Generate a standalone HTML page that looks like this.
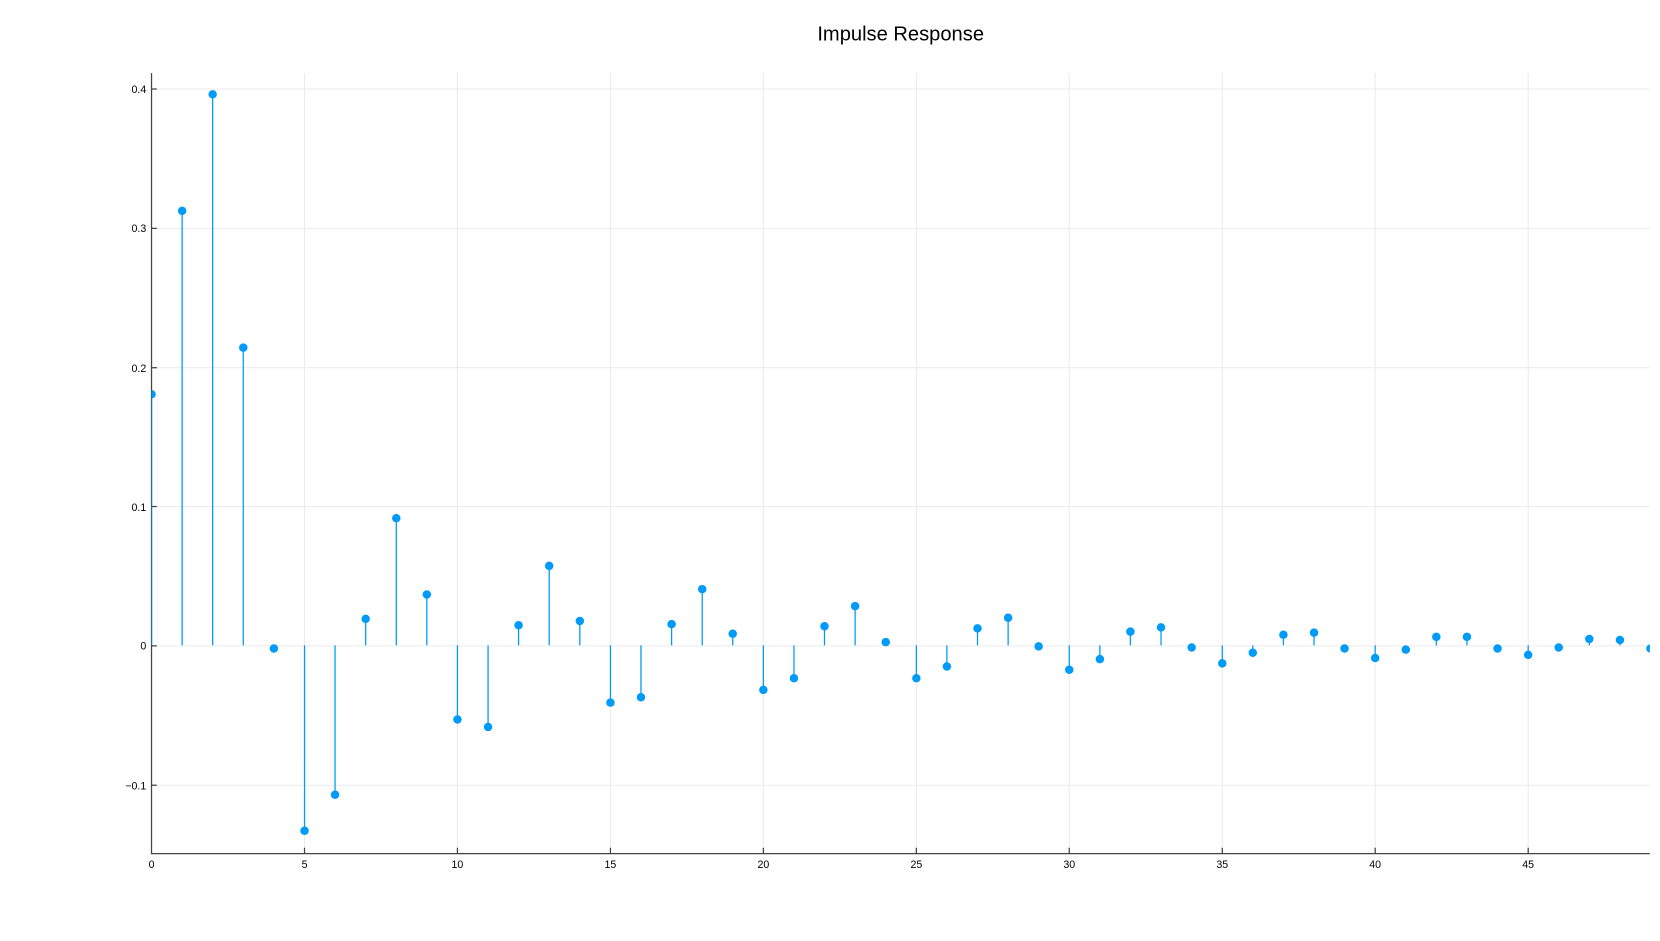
<!DOCTYPE html>
<html><head><meta charset="utf-8"><style>
html,body{margin:0;padding:0;background:#fff;}
svg{display:block;font-family:"Liberation Sans",sans-serif;}
</style></head><body>
<svg width="1660" height="941" viewBox="0 0 1566.6 888" preserveAspectRatio="none" xmlns="http://www.w3.org/2000/svg">
<rect width="1566.6" height="888" fill="#fff"/>
<text x="850" y="38" font-size="19" text-anchor="middle" fill="#000">Impulse Response</text>
<defs><clipPath id="c"><rect x="143" y="66" width="1414" height="740"/></clipPath></defs>
<g stroke="#ebebeb" stroke-width="1">
<line x1="287.4" y1="69" x2="287.4" y2="805"/><line x1="431.7" y1="69" x2="431.7" y2="805"/><line x1="576.1" y1="69" x2="576.1" y2="805"/><line x1="720.4" y1="69" x2="720.4" y2="805"/><line x1="864.8" y1="69" x2="864.8" y2="805"/><line x1="1009.1" y1="69" x2="1009.1" y2="805"/><line x1="1153.5" y1="69" x2="1153.5" y2="805"/><line x1="1297.8" y1="69" x2="1297.8" y2="805"/><line x1="1442.2" y1="69" x2="1442.2" y2="805"/>
<line x1="143" y1="84" x2="1557" y2="84"/><line x1="143" y1="215.5" x2="1557" y2="215.5"/><line x1="143" y1="347" x2="1557" y2="347"/><line x1="143" y1="478" x2="1557" y2="478"/><line x1="143" y1="609.5" x2="1557" y2="609.5"/><line x1="143" y1="741" x2="1557" y2="741"/>
</g>
<g stroke="#444" stroke-width="1.2">
<line x1="143" y1="69" x2="143" y2="806"/><line x1="142.5" y1="805.5" x2="1557" y2="805.5"/>
<line x1="143" y1="84" x2="148" y2="84"/><line x1="143" y1="215.5" x2="148" y2="215.5"/><line x1="143" y1="347" x2="148" y2="347"/><line x1="143" y1="478" x2="148" y2="478"/><line x1="143" y1="609.5" x2="148" y2="609.5"/><line x1="143" y1="741" x2="148" y2="741"/>
<line x1="287.4" y1="805" x2="287.4" y2="800"/><line x1="431.7" y1="805" x2="431.7" y2="800"/><line x1="576.1" y1="805" x2="576.1" y2="800"/><line x1="720.4" y1="805" x2="720.4" y2="800"/><line x1="864.8" y1="805" x2="864.8" y2="800"/><line x1="1009.1" y1="805" x2="1009.1" y2="800"/><line x1="1153.5" y1="805" x2="1153.5" y2="800"/><line x1="1297.8" y1="805" x2="1297.8" y2="800"/><line x1="1442.2" y1="805" x2="1442.2" y2="800"/>
</g>
<g font-size="10" fill="#000" text-anchor="end">
<text x="138" y="88">0.4</text><text x="138" y="219">0.3</text><text x="138" y="351">0.2</text><text x="138" y="482">0.1</text><text x="138" y="613">0</text><text x="138" y="745">−0.1</text>
</g>
<g font-size="10" fill="#000" text-anchor="middle">
<text x="143" y="819">0</text><text x="287.4" y="819">5</text><text x="431.7" y="819">10</text><text x="576.1" y="819">15</text><text x="720.4" y="819">20</text><text x="864.8" y="819">25</text><text x="1009.1" y="819">30</text><text x="1153.5" y="819">35</text><text x="1297.8" y="819">40</text><text x="1442.2" y="819">45</text>
</g>
<g clip-path="url(#c)">
<path stroke="#009af9" stroke-width="1.2" fill="none" d="M143 609V372M171.9 609V199M200.7 609V89M229.6 609V328M258.5 609V612M287.4 609V784M316.2 609V750M345.1 609V584M374 609V489M402.8 609V561M431.7 609V679M460.6 609V686M489.4 609V590M518.3 609V534M547.2 609V586M576.1 609V663M604.9 609V658M633.8 609V589M662.7 609V556M691.5 609V598M720.4 609V651M749.3 609V640M778.1 609V591M807 609V572M835.9 609V606M864.8 609V640M893.6 609V629M922.5 609V593M951.4 609V583M980.2 609V610M1009.1 609V632M1038 609V622M1066.8 609V596M1095.7 609V592M1124.6 609V611M1153.5 609V626M1182.3 609V616M1211.2 609V599M1240.1 609V597M1268.9 609V612M1297.8 609V621M1326.7 609V613M1355.5 609V601M1384.4 609V601M1413.3 609V612M1442.2 609V618M1471 609V611M1499.9 609V603M1528.8 609V604M1557.6 609V612"/>
<g fill="#009af9">
<circle cx="143" cy="372" r="4"/><circle cx="171.9" cy="199" r="4"/><circle cx="200.7" cy="89" r="4"/><circle cx="229.6" cy="328" r="4"/><circle cx="258.5" cy="612" r="4"/><circle cx="287.4" cy="784" r="4"/><circle cx="316.2" cy="750" r="4"/><circle cx="345.1" cy="584" r="4"/><circle cx="374" cy="489" r="4"/><circle cx="402.8" cy="561" r="4"/><circle cx="431.7" cy="679" r="4"/><circle cx="460.6" cy="686" r="4"/><circle cx="489.4" cy="590" r="4"/><circle cx="518.3" cy="534" r="4"/><circle cx="547.2" cy="586" r="4"/><circle cx="576.1" cy="663" r="4"/><circle cx="604.9" cy="658" r="4"/><circle cx="633.8" cy="589" r="4"/><circle cx="662.7" cy="556" r="4"/><circle cx="691.5" cy="598" r="4"/><circle cx="720.4" cy="651" r="4"/><circle cx="749.3" cy="640" r="4"/><circle cx="778.1" cy="591" r="4"/><circle cx="807" cy="572" r="4"/><circle cx="835.9" cy="606" r="4"/><circle cx="864.8" cy="640" r="4"/><circle cx="893.6" cy="629" r="4"/><circle cx="922.5" cy="593" r="4"/><circle cx="951.4" cy="583" r="4"/><circle cx="980.2" cy="610" r="4"/><circle cx="1009.1" cy="632" r="4"/><circle cx="1038" cy="622" r="4"/><circle cx="1066.8" cy="596" r="4"/><circle cx="1095.7" cy="592" r="4"/><circle cx="1124.6" cy="611" r="4"/><circle cx="1153.5" cy="626" r="4"/><circle cx="1182.3" cy="616" r="4"/><circle cx="1211.2" cy="599" r="4"/><circle cx="1240.1" cy="597" r="4"/><circle cx="1268.9" cy="612" r="4"/><circle cx="1297.8" cy="621" r="4"/><circle cx="1326.7" cy="613" r="4"/><circle cx="1355.5" cy="601" r="4"/><circle cx="1384.4" cy="601" r="4"/><circle cx="1413.3" cy="612" r="4"/><circle cx="1442.2" cy="618" r="4"/><circle cx="1471" cy="611" r="4"/><circle cx="1499.9" cy="603" r="4"/><circle cx="1528.8" cy="604" r="4"/><circle cx="1557.6" cy="612" r="4"/>
</g>
</g>
</svg>
</body></html>
